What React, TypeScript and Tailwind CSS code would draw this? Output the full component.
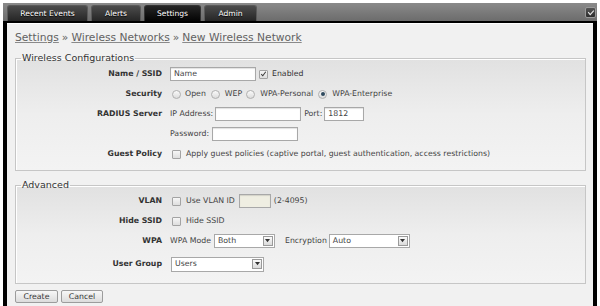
import type { ReactNode } from 'react'

const tabs = [
  { label: 'Recent Events', w: 'w-[81px]' },
  { label: 'Alerts', w: 'w-[50px]' },
  { label: 'Settings', w: 'w-[57px]', active: true },
  { label: 'Admin', w: 'w-[53px]' },
]

function Checkbox({ checked = false }: { checked?: boolean }) {
  return (
    <span className="flex size-[9px] flex-none items-center justify-center rounded-[1px] border border-[#a3a3a3] bg-gradient-to-b from-[#f6f6f6] to-[#dedede]">
      {checked && (
        <svg viewBox="0 0 9 9" className="size-[8px]">
          <path d="M1.6 4.6 L3.6 6.8 L7.4 1.6" fill="none" stroke="#3a3a3a" strokeWidth="1.3" />
        </svg>
      )}
    </span>
  )
}

function Radio({ checked = false }: { checked?: boolean }) {
  return (
    <span className="flex size-[9px] flex-none items-center justify-center rounded-full border border-[#b0b0b0] bg-gradient-to-b from-[#fafafa] to-[#dcdcdc]">
      {checked && <span className="size-[4px] rounded-full bg-[#2f4a5e]" />}
    </span>
  )
}

function TextInput({ className, value, tint }: { className: string; value?: string; tint?: boolean }) {
  return (
    <span
      className={`flex h-[14px] flex-none items-center border border-[#a8a8a8] pl-[3px] text-[#444] shadow-[inset_0_1px_1px_rgba(0,0,0,0.12)] ${
        tint ? 'bg-[#efeee2]' : 'bg-white'
      } ${className}`}
    >
      {value}
    </span>
  )
}

function Select({ className, value }: { className: string; value: string }) {
  return (
    <span
      className={`flex h-[14px] flex-none items-center justify-between border border-[#a8a8a8] bg-white pl-[3px] pr-[1px] text-[#444] ${className}`}
    >
      {value}
      <span className="flex size-[10px] items-center justify-center border border-[#9a9a9a] bg-gradient-to-b from-[#fbfbfb] to-[#dadada]">
        <svg viewBox="0 0 6 4" className="w-[5px]">
          <path d="M0 0 H6 L3 4 Z" fill="#333" />
        </svg>
      </span>
    </span>
  )
}

function Row({ label, children, tall }: { label: string; children: ReactNode; tall?: boolean }) {
  return (
    <>
      <div className={`flex items-center justify-end font-bold text-[#333] ${tall ? 'h-[24px] pt-[2px]' : 'h-[20px]'}`}>
        {label}
      </div>
      <div className={`flex items-center ${tall ? 'h-[24px] pt-[2px]' : 'h-[20px]'}`}>{children}</div>
    </>
  )
}

function Group({ title, children, className }: { title: string; children: ReactNode; className?: string }) {
  return (
    <fieldset
      className={`border border-[#c6c6c6] bg-gradient-to-b from-[#e1e1e1] via-[#eeeeee] to-[#f3f3f3] shadow-[inset_1px_1px_0_#fff] ${className ?? ''}`}
    >
      <legend className="ml-[5px] px-[1px] text-[9.5px] leading-[12px] text-[#333]">{title}</legend>
      <div className="grid grid-cols-[146px_1fr] gap-x-[8px]">{children}</div>
    </fieldset>
  )
}

function Button({ children, className }: { children: ReactNode; className: string }) {
  return (
    <span
      className={`flex h-[13px] items-center justify-center rounded-[2px] border border-[#9c9c9c] bg-gradient-to-b from-[#f7f7f7] to-[#dcdcdc] text-[#333] ${className}`}
    >
      {children}
    </span>
  )
}

export default function App() {
  return (
    <div className="h-[306px] w-[600px] overflow-hidden bg-white px-[3px] pt-[3px] font-['DejaVu_Sans',sans-serif] text-[7.8px] leading-none">
      <div className="flex h-[18px] items-end gap-[3px] bg-gradient-to-b from-[#8a8a8a] to-[#6c6c6c] pl-[4px]">
        {tabs.map((t) => (
          <div
            key={t.label}
            className={`flex h-[16px] items-center justify-center rounded-t-[3px] border border-b-0 text-[7.6px] text-white [text-shadow:0_1px_1px_#000] ${t.w} ${
              t.active
                ? 'border-[#333] bg-gradient-to-b from-[#262626] to-[#050505]'
                : 'border-[#5a5a5a] bg-gradient-to-b from-[#4c4c4c] to-[#262626]'
            }`}
          >
            {t.label}
          </div>
        ))}
        <span className="mb-[3px] mr-[1px] ml-auto flex size-[11px] items-center justify-center rounded-[2px] border border-[#9a9a9a] bg-gradient-to-b from-[#555] to-[#2c2c2c]">
          <svg viewBox="0 0 10 10" className="size-[8px]">
            <path d="M1.5 4 L4 7 L8.5 2" fill="none" stroke="#e8e8e8" strokeWidth="1.4" />
          </svg>
        </span>
      </div>

      <div className="h-[300px] border-x-[4px] border-t-[2px] border-black bg-[#f1f1f1] pl-[8px] pr-[7px] shadow-[inset_0_1px_0_#fff]">
        <div className="mt-[7px] flex h-[16px] items-center pt-[1px] text-[10.7px] text-[#626262]">
          <span className="underline decoration-[#8a8a8a]">Settings</span>
          <span className="px-[3px]">»</span>
          <span className="underline decoration-[#8a8a8a]">Wireless Networks</span>
          <span className="px-[3px]">»</span>
          <span className="underline decoration-[#8a8a8a]">New Wireless Network</span>
        </div>

        <Group title="Wireless Configurations" className="mt-[6px] pb-[6px]">
          <Row label="Name / SSID">
            <TextInput className="w-[86px]" value="Name" />
            <span className="ml-[3px]">
              <Checkbox checked />
            </span>
            <span className="ml-[4px] text-[#333]">Enabled</span>
          </Row>
          <Row label="Security">
            <span className="flex items-center gap-[2px] pl-[2px] text-[#444]">
              <Radio />
              <span className="ml-[2px] mr-[3px]">Open</span>
              <Radio />
              <span className="ml-[3px] mr-[2px]">WEP</span>
              <Radio />
              <span className="ml-[3px] mr-[3px]">WPA-Personal</span>
              <Radio checked />
              <span className="ml-[3px]">WPA-Enterprise</span>
            </span>
          </Row>
          <Row label="RADIUS Server">
            <span className="text-[#444]">IP Address:</span>
            <TextInput className="ml-[2px] w-[86px]" />
            <span className="ml-[3px] text-[#444]">Port:</span>
            <TextInput className="ml-[2px] w-[40px]" value="1812" />
          </Row>
          <Row label="">
            <span className="text-[#444]">Password:</span>
            <TextInput className="ml-[3px] w-[86px]" />
          </Row>
          <Row label="Guest Policy">
            <span className="ml-[2px]">
              <Checkbox />
            </span>
            <span className="ml-[5px] text-[#444]">
              Apply guest policies (captive portal, guest authentication, access restrictions)
            </span>
          </Row>
        </Group>

        <Group title="Advanced" className="mt-[8px] pb-[8px]">
          <Row label="VLAN">
            <span className="ml-[2px]">
              <Checkbox />
            </span>
            <span className="ml-[5px] text-[#444]">Use VLAN ID</span>
            <TextInput className="ml-[4px] w-[32px]" tint />
            <span className="ml-[3px] text-[#444]">(2-4095)</span>
          </Row>
          <Row label="Hide SSID">
            <span className="ml-[2px]">
              <Checkbox />
            </span>
            <span className="ml-[5px] text-[#444]">Hide SSID</span>
          </Row>
          <Row label="WPA">
            <span className="text-[#444]">WPA Mode</span>
            <Select className="ml-[3px] w-[61px]" value="Both" />
            <span className="ml-[10px] text-[#444]">Encryption</span>
            <Select className="ml-[2px] w-[81px]" value="Auto" />
          </Row>
          <Row label="User Group" tall>
            <Select className="ml-[1px] h-[15px] w-[93px]" value="Users" />
          </Row>
        </Group>

        <div className="mt-[6px] flex gap-[3px]">
          <Button className="w-[43px]">Create</Button>
          <Button className="w-[42px]">Cancel</Button>
        </div>
      </div>
    </div>
  )
}
